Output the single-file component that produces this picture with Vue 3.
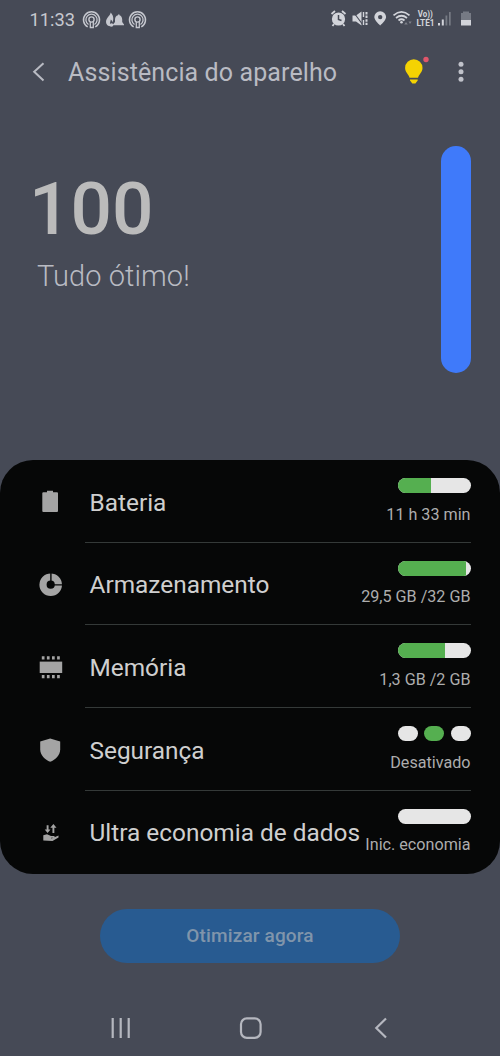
<script setup>
const rows = [
  { id: 'battery', label: 'Bateria', value: '11 h 33 min', fill: 46 },
  { id: 'storage', label: 'Armazenamento', value: '29,5 GB /32 GB', fill: 93.5 },
  { id: 'memory', label: 'Memória', value: '1,3 GB /2 GB', fill: 65 },
  { id: 'security', label: 'Segurança', value: 'Desativado', pills: true },
  { id: 'data', label: 'Ultra economia de dados', value: 'Inic. economia', fill: 0 },
]
</script>

<template>
  <div class="screen">
    <div class="status">
      <span class="clock">11:33</span>
      <svg class="notif" width="68" height="20" viewBox="0 0 68 20" fill="none" stroke="#c6c8cf">
        <g v-for="x in [9.5, 55.5]" :key="x" :transform="`translate(${x} 9.5)`">
          <path d="M-3.8 7.4A8 8 0 1 1 3.800 7.400" stroke-width="1.5" />
          <path d="M-3 5A5.600 5.600 0 1 1 3 5" stroke-width="1.3" />
          <circle r="2.600" stroke-width="1.4" />
          <path d="M-1.200 2.400V8H1.800V2.400" stroke-width="1.3" />
        </g>
        <g fill="#c6c8cf" stroke="none">
          <path d="M28.500 2.500C29 5 24 7.500 24 12C24 15 26.500 16.500 29 16.300C27 14 28.500 12 28.800 9.500C30 10.500 30.500 11.500 30.500 12.500C32 9 31.500 5 28.500 2.500Z" />
          <path d="M31 14.500L33 12V9.500Q33 6 36 5.300V4.500H37.500V5.300Q40 6 40.200 9.500V12L42 14.500V15.300H31Z" />
          <circle cx="29.500" cy="15" r="1.800" />
        </g>
      </svg>
      <svg class="system" width="145" height="24" viewBox="330 6 145 24" fill="#d2d4da">
        <circle cx="338.500" cy="19" r="6.600" />
        <path d="M331.500 14L335 11M345.500 14L342 11M334 24L332.500 26M343 24L344.500 26" stroke="#d2d4da" stroke-width="1.800" />
        <path d="M338.500 15V19.500L341.500 20.500" fill="none" stroke="#464a56" stroke-width="1.500" />
        <path d="M352.500 15.500H356L361.500 11.500V25.500L356 21.500H352.500Z" />
        <path d="M353 11.500L363 25" stroke="#464a56" stroke-width="1.100" />
        <path d="M363.500 12V17M363.500 20V25" stroke="#d2d4da" stroke-width="1.400" />
        <path d="M366.500 12V25" stroke="#d2d4da" stroke-width="2" stroke-dasharray="2.500 1.100" />
        <path fill-rule="evenodd" d="M380.200 11.200A5.900 5.900 0 0 0 374.300 17.100C374.300 20.500 380.200 25.500 380.200 25.500S386.100 20.500 386.100 17.100A5.900 5.900 0 0 0 380.200 11.200ZM380.200 14.900A2.200 2.200 0 1 1 380.200 19.300A2.200 2.200 0 0 1 380.200 14.900Z" />
        <g fill="none" stroke="#d2d4da" stroke-width="1.700">
          <path d="M393.500 15.300Q401.500 8.500 409.500 15.300" />
          <path d="M396 18Q401.500 13.500 407 18" />
          <path d="M398.500 20.500Q401.500 18 404.500 20.500" />
        </g>
        <circle cx="401.500" cy="22.300" r="1.300" />
        <path d="M404.200 24.500L406 22L407.800 24.500ZM408.500 21.500L410 24L411.700 21.500Z" opacity=".4" />
        <text class="volte" x="417.800" y="17.300" textLength="15" lengthAdjust="spacingAndGlyphs">Vo))</text>
        <text class="volte" x="416.500" y="25.500" textLength="18" lengthAdjust="spacingAndGlyphs">LTE1</text>
        <path d="M438 23H440V25.500H438ZM441.800 19.500H443.800V25.500H441.800Z" />
        <path d="M445.500 15.500H447.300V25.500H445.500ZM449 12H450.700V25.500H449Z" opacity=".35" />
        <path d="M463 11.500H469V13H471V20H461V13H463Z" opacity=".35" />
        <path d="M461 20H471V25.500H461Z" />
      </svg>
    </div>

    <header class="bar">
      <svg class="back" width="14" height="20" viewBox="0 0 14 20" fill="none" stroke="#b9bbc3" stroke-width="2"><path d="M11.500 1.300L2.200 9.800L11.500 18.500" /></svg>
      <h1>Assistência do aparelho</h1>
      <svg class="tip" width="28" height="30" viewBox="402 56 28 30">
        <path fill="#f4d302" d="M413.800 59.300A8.700 8.700 0 0 0 405.100 68C405.100 72.300 408.500 74 409.600 77.800H418C419.100 74 422.500 72.300 422.500 68A8.700 8.700 0 0 0 413.800 59.300ZM410 79.500H417.700V80.500L415.400 83.500H412.300L410 80.500Z" />
        <circle cx="426" cy="59.500" r="2.700" fill="#e0566b" />
      </svg>
      <svg class="more" width="8" height="22" viewBox="0 0 8 22" fill="#c0c2ca"><circle cx="4" cy="3.300" r="2.500" /><circle cx="4" cy="10.800" r="2.500" /><circle cx="4" cy="18.200" r="2.500" /></svg>
    </header>

    <section class="hero">
      <div>
        <div class="score">100</div>
        <div class="verdict">Tudo ótimo!</div>
      </div>
      <div class="gauge"></div>
    </section>

    <main class="card">
      <div v-for="r in rows" :key="r.id" class="row">
        <svg class="icon" width="26" height="26" viewBox="0 0 26 26" fill="#a4a4a4">
          <path v-if="r.id === 'battery'" d="M10 1.700H16V3.200H20Q21 3.200 21 4.200V22Q21 23 20 23H6.300Q5.300 23 5.300 22V4.200Q5.300 3.200 6.300 3.200H10Z" />
          <g v-else-if="r.id === 'storage'">
            <circle cx="13.700" cy="12.700" r="7.700" fill="none" stroke="#a4a4a4" stroke-width="7.200" />
            <path d="M13.900 12.700V0M13.900 12.900H26" stroke="#060707" stroke-width="1.400" />
          </g>
          <g v-else-if="r.id === 'memory'">
            <path d="M2.700 7.600H25.200V19H2.700Z" />
            <path d="M4.800 3.800H23.200M4.800 22.600H23.200" stroke="#a4a4a4" stroke-width="3.200" stroke-dasharray="2.700 2.400" />
          </g>
          <path v-else-if="r.id === 'security'" d="M13.200 1.500L23.200 4.500V12.200C23.200 18.200 18.500 22.700 13.200 24.700C7.900 22.700 3.200 18.200 3.200 12.200V4.500Z" />
          <g v-else>
            <path d="M6.300 15.300L10 14.300L14 16H17.500V17.800H14L14.500 18.500L21.500 15.500V17.500L15.500 21L6.300 20.500Z" />
            <path d="M7.700 9.500H13.500L10.600 13ZM13.300 7.800H19.500L16.400 4Z" />
            <path d="M10.600 5.200V10.500M16.400 7V13" stroke="#a4a4a4" stroke-width="1.900" />
          </g>
        </svg>
        <div class="body">
          <span class="label">{{ r.label }}</span>
          <div class="meter">
            <div v-if="r.pills" class="pills"><i></i><i class="on"></i><i></i></div>
            <div v-else class="track"><div class="fill" :style="{ width: r.fill + '%' }"></div></div>
            <span class="value">{{ r.value }}</span>
          </div>
        </div>
      </div>
    </main>

    <button class="optimize">Otimizar agora</button>

    <nav class="nav">
      <svg width="22" height="22" viewBox="0 0 22 22" stroke="#b5b7bf" stroke-width="2.200"><path d="M2.700 1V21M10.700 1V21M18.700 1V21" /></svg>
      <svg class="home" width="24" height="24" viewBox="0 0 24 24" fill="none" stroke="#b5b7bf" stroke-width="2.200"><rect x="2" y="2.400" width="19.600" height="19.400" rx="5.800" /></svg>
      <svg width="14" height="22" viewBox="0 0 14 22" fill="none" stroke="#b5b7bf" stroke-width="2.200"><path d="M12 1.500L2.300 11L12 20.500" /></svg>
    </nav>
  </div>
</template>

<style>
body { background: #464a56; }
</style>

<style scoped>
.screen {
  width: 500px; height: 1056px; overflow: hidden; box-sizing: border-box;
  display: flex; flex-direction: column;
  background: #464a56; font-family: Roboto, sans-serif; color: #b9bbc3;
}
.status { height: 40px; display: flex; align-items: center; padding: 0 25px 0 29.500px; }
.clock { font-size: 18.300px; line-height: 40px; color: #c6c8cf; width: 52.500px; white-space: nowrap; }
.notif { display: block; }
.system { display: block; margin-left: auto; margin-top: -4px; }
.volte { font: 700 9px Roboto, sans-serif; }
.bar { height: 64px; display: flex; align-items: center; padding-left: 31.500px; }
h1 { margin: 2px 0 0 22.500px; width: 334px; font-size: 25px; letter-spacing: 0.110px; font-weight: 400; line-height: 32px; white-space: nowrap; }
.tip { margin-top: -2px; }
.more { margin-left: 27px; }
.hero { height: 356px; display: flex; justify-content: space-between; padding: 42px 29px 0 32px; box-sizing: border-box; }
.score { margin: 26px 0 0 -3px; font-size: 73px; line-height: 74px; font-weight: 500; color: #bbb; }
.verdict { margin: 12px 0 0 5px; font-size: 29px; letter-spacing: 0.080px; line-height: 36px; font-weight: 300; white-space: nowrap; }
.gauge { width: 30px; height: 227px; border-radius: 15px; background: #3f7afa; }
.card { height: 413.500px; background: #060707; border-radius: 33px; display: grid; grid-template-rows: repeat(5, 82.700px); box-sizing: border-box; }
.row { display: flex; padding: 0 29.500px 0 37px; }
.icon { margin-top: 29px; flex: none; }
.body { flex: 1; margin-left: 22px; padding-left: 4.500px; display: flex; justify-content: space-between; border-bottom: 1px solid #343938; }
.row:last-child .body { border-bottom: 0; }
.label { margin-top: 26.500px; font-size: 24.400px; line-height: 32px; color: #cfcfcf; white-space: nowrap; }
.meter { width: 0; margin-top: 18px; display: flex; flex-direction: column; align-items: flex-end; }
.track { width: 73px; height: 15px; border-radius: 8px; background: #e6e6e6; overflow: hidden; flex: none; }
.fill { height: 100%; background: #55af50; }
.pills { display: flex; gap: 6.500px; }
.pills i { width: 20px; height: 15px; border-radius: 7.500px; background: #e6e6e6; }
.pills i.on { background: #55af50; }
.value { margin-top: 11.500px; font-size: 16.150px; line-height: 20px; color: #adadad; white-space: nowrap; }
.optimize {
  align-self: center; width: 300px; height: 54px; margin-top: 35px; padding: 0;
  border: 0; border-radius: 27px; background: #285b91; color: #8095ab;
  font: 500 19px Roboto, sans-serif; letter-spacing: 0.150px;
}
.nav { margin-top: 53px; display: flex; align-items: center; justify-content: space-between; padding: 0 112px 0 110px; height: 24px; }
.home { margin-left: -4px; }
</style>
